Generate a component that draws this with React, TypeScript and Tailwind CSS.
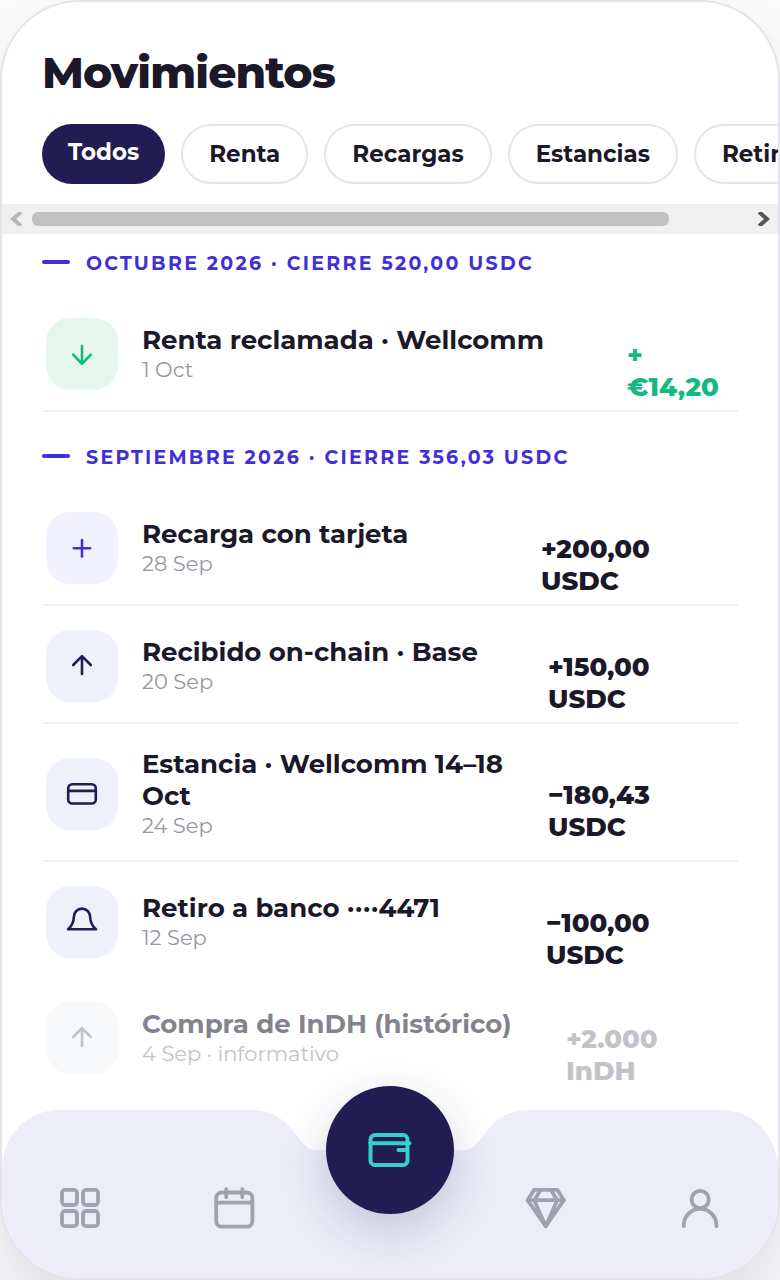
import { useRef, useState } from "react";
import type { ReactNode } from "react";
import clsx from "clsx";

type IconName = "down" | "plus" | "up" | "card" | "bell";

interface Movement {
  title: string;
  date: string;
  // Figure and currency sit on separate lines
  amount: [string, string];
  amountClass: string;
  icon: IconName;
  tileClass: string;
  muted?: boolean;
}

interface MonthGroup {
  label: string;
  movements: Movement[];
}

const FILTERS = ["Todos", "Renta", "Recargas", "Estancias", "Retiros"];

const GROUPS: MonthGroup[] = [
  {
    label: "OCTUBRE 2026 · CIERRE 520,00 USDC",
    movements: [
      {
        title: "Renta reclamada · Wellcomm",
        date: "1 Oct",
        amount: ["+", "€14,20"],
        amountClass: "w-[107px] text-[#14b881]",
        icon: "down",
        tileClass: "bg-[#e5f7ed] text-[#14b881]",
      },
    ],
  },
  {
    label: "SEPTIEMBRE 2026 · CIERRE 356,03 USDC",
    movements: [
      {
        title: "Recarga con tarjeta",
        date: "28 Sep",
        amount: ["+200,00", "USDC"],
        amountClass: "w-[193px] text-[#1a1829]",
        icon: "plus",
        tileClass: "bg-[#f2f1ff] text-[#3f30d9]",
      },
      {
        title: "Recibido on-chain · Base",
        date: "20 Sep",
        amount: ["+150,00", "USDC"],
        amountClass: "w-[186px] text-[#1a1829]",
        icon: "up",
        tileClass: "bg-[#eef0fa] text-[#211c52]",
      },
      {
        title: "Estancia · Wellcomm 14–18 Oct",
        date: "24 Sep",
        amount: ["−180,43", "USDC"],
        amountClass: "w-[186px] text-[#1a1829]",
        icon: "card",
        tileClass: "bg-[#eef0fa] text-[#211c52]",
      },
      {
        title: "Retiro a banco ····4471",
        date: "12 Sep",
        amount: ["−100,00", "USDC"],
        amountClass: "w-[188px] text-[#1a1829]",
        icon: "bell",
        tileClass: "bg-[#eef0fa] text-[#211c52]",
      },
      {
        title: "Compra de InDH (histórico)",
        date: "4 Sep · informativo",
        amount: ["+2.000", "InDH"],
        amountClass: "w-[168px] text-[#c2c3c9]",
        icon: "up",
        tileClass: "bg-[#f8f9fa] text-[#c2c3c9]",
        muted: true,
      },
    ],
  },
];

const ICON_PATHS: Record<IconName, ReactNode> = {
  down: <path d="M18 10v17.8M9.200 18.600l8.800 9.200 8.800-9.200" />,
  plus: <path d="M18 10v16.500M9.800 18.200h16.400" />,
  up: <path d="M18 26V8.200M9.200 17L18 8.200l8.800 8.800" />,
  card: (
    <>
      <rect x="4.200" y="8.200" width="27.600" height="19.300" rx="4" />
      <path d="M4.200 14.900h27.600" />
    </>
  ),
  bell: <path d="M4 25.200C8.500 21.700 9.700 18 9.900 12.700a8.100 8.100 0 0 1 16.200 0c.2 5.300 1.400 9 5.900 12.500z" />,
};

function MovementIcon({ name }: { name: IconName }) {
  return (
    <svg
      viewBox="0 0 36 36"
      className="size-9"
      fill="none"
      stroke="currentColor"
      strokeWidth="2.6"
      strokeLinecap="round"
      strokeLinejoin="round"
      aria-hidden="true"
    >
      {ICON_PATHS[name]}
    </svg>
  );
}

function MovementRow({ movement, divider }: { movement: Movement; divider: boolean }) {
  const { title, date, amount, amountClass, icon, tileClass, muted } = movement;
  return (
    <li className={clsx("flex items-center gap-6 px-1 pt-6 pb-5", divider && "border-b-2 border-[#f2f2f4]")}>
      <div className={clsx("flex size-[72px] shrink-0 items-center justify-center rounded-3xl", tileClass)}>
        <MovementIcon name={icon} />
      </div>
      <div className="min-w-0 flex-1">
        <h3 className={clsx("text-[26px] leading-8 font-bold", muted ? "text-[#84838d]" : "text-[#1a1829]")}>
          {title}
        </h3>
        <p className={clsx("text-[21px] leading-7 font-normal", muted ? "text-[#c2c3c9]" : "text-[#9696a3]")}>
          {date}
        </p>
      </div>
      <div className={clsx("h-[30px] shrink-0 text-[26px] leading-8 font-extrabold", amountClass)}>
        <span className="block">{amount[0]}</span>
        <span className="block">{amount[1]}</span>
      </div>
    </li>
  );
}

function NavItem({ label, children }: { label: string; children: ReactNode }) {
  return (
    <a href="#" aria-label={label} className="flex flex-1 justify-center text-[#9ea1b0]">
      <svg
        viewBox="0 0 44 44"
        className="size-11"
        fill="none"
        stroke="currentColor"
        strokeWidth="3.8"
        strokeLinecap="round"
        strokeLinejoin="round"
      >
        {children}
      </svg>
    </a>
  );
}

function BottomNav() {
  return (
    <nav className="relative mt-auto h-[168px]">
      <svg
        viewBox="0 0 776 168"
        preserveAspectRatio="none"
        className="absolute inset-0 size-full"
        fill="#ecedf9"
        aria-hidden="true"
      >
        <path d="M0 168V60A56 60 0 0 1 56 0H248C270 0 280 8 291 21L300 32C306 39 309 40 316 40H460C467 40 470 39 476 32L485 21C496 8 506 0 528 0H720A56 60 0 0 1 776 60V168Z" />
      </svg>

      <div className="relative flex h-full items-center pt-7">
        <NavItem label="Inicio">
          <rect x="4" y="3.800" width="15" height="15.200" rx="3.200" />
          <rect x="25" y="3.800" width="15" height="15.200" rx="3.200" />
          <rect x="4" y="25" width="15" height="15.200" rx="3.200" />
          <rect x="25" y="25" width="15" height="15.200" rx="3.200" />
        </NavItem>
        <NavItem label="Calendario">
          <rect x="3.200" y="6.500" width="36.200" height="34.200" rx="5.500" />
          <path d="M3.200 16.700h36.200M13.200 3.200v8M29.300 3.200v8" />
        </NavItem>
        <div className="flex-1" />
        <NavItem label="Inversiones">
          <path d="M11 3.900h23.500l6.300 10.300L22.700 40.200 4.600 14.200z" />
          <path d="M4.600 14.200H40.800M17.500 3.900L11.300 14.200l11.400 26L34.200 14.200 28 3.900" />
        </NavItem>
        <NavItem label="Perfil">
          <circle cx="22.200" cy="13.500" r="8.600" />
          <path d="M5.800 40.200v-1a16.300 16.300 0 0 1 32.600 0v1" />
        </NavItem>
      </div>

      {/* Floating wallet button */}
      <button
        aria-label="Cartera"
        className="absolute -top-6 left-1/2 flex size-32 -translate-x-1/2 items-center justify-center rounded-full bg-[#211d52] text-[#36cfcf] shadow-[0_16px_48px_rgba(33,29,82,0.2)]"
      >
        <svg
          viewBox="0 0 44 44"
          className="size-11"
          fill="none"
          stroke="currentColor"
          strokeWidth="4"
          strokeLinecap="round"
          strokeLinejoin="round"
          aria-hidden="true"
        >
          <rect x="2.500" y="7" width="37" height="30" rx="4.500" />
          <path d="M2.500 15.300h39M30.500 22h8" />
        </svg>
      </button>
    </nav>
  );
}

export default function App() {
  const [active, setActive] = useState("Todos");
  const chipsRef = useRef<HTMLDivElement>(null);

  const scrollChips = (delta: number) => {
    chipsRef.current?.scrollBy({ left: delta, behavior: "smooth" });
  };

  return (
    <div className="min-h-screen overflow-hidden bg-white font-[Montserrat,Inter,sans-serif] text-[#1a1829]">
      <main className="flex min-h-screen flex-col overflow-hidden rounded-[80px] border-2 border-[#e4e4ea] bg-white shadow-[0_48px_120px_rgba(26,24,60,0.18)]">
        <h1 className="px-10 pt-[42px] text-[44px] leading-[56px] font-extrabold tracking-[-0.02em]">Movimientos</h1>

        <div ref={chipsRef} className="flex gap-4 overflow-x-auto px-10 pt-6 pb-5 [scrollbar-width:none]">
          {FILTERS.map((filter) => (
            <button
              key={filter}
              onClick={() => setActive(filter)}
              aria-pressed={active === filter}
              className={clsx(
                "shrink-0 rounded-full px-[26px] text-[23px] leading-7 font-bold",
                active === filter
                  ? "bg-[#211c52] pt-[14px] pb-[18px] text-white"
                  : "border-2 border-[#e6e6ea] py-[14px]"
              )}
            >
              {filter}
            </button>
          ))}
        </div>

        {/* Scroll track for the filter chips */}
        <div className="flex h-[30px] items-center gap-[10px] bg-[#f0f0f0] px-[6px]">
          <button aria-label="Anterior" onClick={() => scrollChips(-200)} className="text-[#b8b8b8]">
            <svg viewBox="0 0 14 14" className="size-[14px]" fill="none" stroke="currentColor" strokeWidth="4">
              <path d="M13 0L5 7l8 7" />
            </svg>
          </button>
          <div className="flex-1">
            <div className="h-[14px] w-[89%] rounded-md bg-[#c1c1c1]" />
          </div>
          <button aria-label="Siguiente" onClick={() => scrollChips(200)} className="text-[#555555]">
            <svg viewBox="0 0 14 14" className="size-[14px]" fill="none" stroke="currentColor" strokeWidth="4">
              <path d="M1 0l8 7-8 7" />
            </svg>
          </button>
        </div>

        <div className="flex flex-col gap-4 px-10 pb-3">
          {GROUPS.map((group) => (
            <section key={group.label}>
              <h2 className="flex items-center gap-4 py-4 text-[19px] leading-7 font-bold tracking-[0.12em] text-[#3f30d9]">
                <span className="mb-1 h-1 w-7 rounded-full bg-[#3f30d9]" />
                {group.label}
              </h2>
              <ul>
                {group.movements.map((movement, i) => (
                  <MovementRow
                    key={movement.title}
                    movement={movement}
                    divider={!movement.muted && !group.movements[i + 1]?.muted}
                  />
                ))}
              </ul>
            </section>
          ))}
        </div>

        <BottomNav />
      </main>
    </div>
  );
}
